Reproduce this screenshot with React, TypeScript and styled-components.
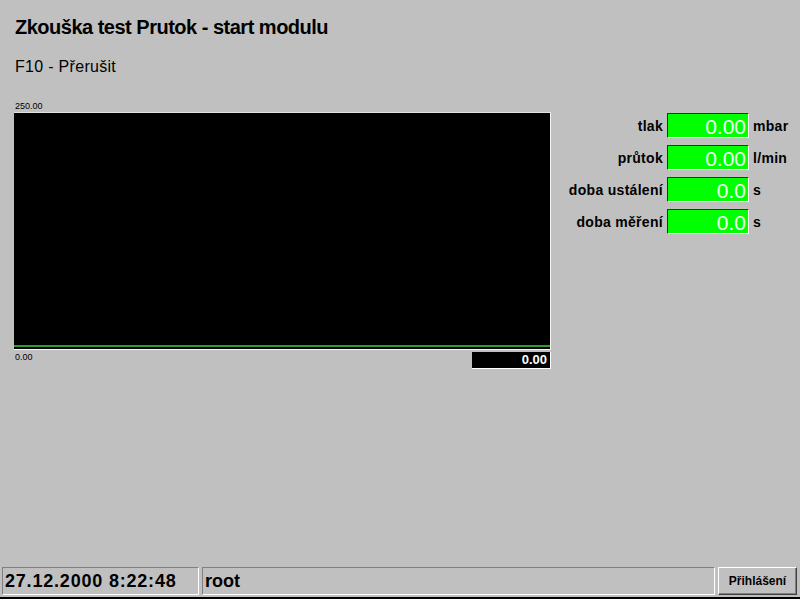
import React from 'react';
import styled, { createGlobalStyle } from 'styled-components';

const GlobalStyle = createGlobalStyle`
  html, body {
    margin: 0;
    padding: 0;
    background: #c0c0c0;
  }
  body {
    font-family: "Liberation Sans", Arial, sans-serif;
    color: #000;
  }
`;

const Screen = styled.div`
  width: 800px;
  height: 599px;
  display: flex;
  flex-direction: column;
  background: #c0c0c0;
  overflow: hidden;
`;

const Title = styled.h1`
  margin: 16px 0 0 15px;
  font-size: 20px;
  line-height: 22px;
  letter-spacing: -0.5px;
  font-weight: bold;
`;

const Hint = styled.div`
  margin: 20px 0 0 15px;
  font-size: 16px;
  line-height: 18px;
  letter-spacing: 0.3px;
`;

const Main = styled.div`
  display: flex;
  flex-direction: row;
  margin-top: 25px;
  padding-left: 14px;
`;

const ChartColumn = styled.div`
  width: 537px;
  display: flex;
  flex-direction: column;
`;

const AxisLabel = styled.div`
  font-size: 9px;
  line-height: 11px;
  padding-left: 1px;
`;

const ChartArea = styled.div`
  height: 236px;
  background: #000;
  border-top: 1px solid #e0e0e0;
  border-right: 1px solid #f4f4f4;
  border-bottom: 1px solid #f4f4f4;
  display: flex;
  flex-direction: column;
  justify-content: flex-end;
`;

const Trace = styled.div`
  height: 2px;
  margin-bottom: 2px;
  background: #2f9a2f;
`;

const ChartFooter = styled.div`
  display: flex;
  justify-content: space-between;
  align-items: flex-start;
  margin-top: 2px;
`;

const ReadoutBox = styled.div`
  width: 79px;
  height: 17px;
  box-sizing: border-box;
  background: #000;
  color: #fff;
  font-weight: bold;
  font-size: 13px;
  line-height: 16px;
  text-align: right;
  padding-right: 3px;
  border-right: 1px solid #fff;
  border-bottom: 1px solid #fff;
`;

const Panel = styled.div`
  margin: 12px 0 0 10px;
  display: grid;
  grid-template-columns: 102px 82px auto;
  column-gap: 4px;
  row-gap: 7px;
  align-items: center;
  align-self: flex-start;
`;

const FieldLabel = styled.div`
  font-size: 14px;
  font-weight: bold;
  letter-spacing: 0.3px;
  text-align: right;
  white-space: nowrap;
`;

const Field = styled.div`
  height: 25px;
  box-sizing: border-box;
  background: #00ff00;
  border-top: 1px solid #303030;
  border-left: 1px solid #303030;
  border-right: 1px solid #fff;
  border-bottom: 1px solid #fff;
  color: #f0fff0;
  font-size: 21px;
  line-height: 26px;
  text-align: right;
  padding-right: 2px;
`;

const Unit = styled.div`
  font-size: 14px;
  font-weight: bold;
  letter-spacing: 0.3px;
  white-space: nowrap;
`;

const StatusBar = styled.div`
  margin-top: auto;
  height: 33px;
  box-sizing: border-box;
  display: flex;
  gap: 3px;
  padding: 1px 3px 2px 2px;
  border-bottom: 2px solid #000;
`;

const StatusCell = styled.div<{ $width?: number; $spacing?: number }>`
  ${(p) => (p.$width ? `width: ${p.$width}px;` : 'flex: 1;')}
  height: 28px;
  box-sizing: border-box;
  border-top: 1px solid #808080;
  border-left: 1px solid #808080;
  border-right: 1px solid #fff;
  border-bottom: 1px solid #fff;
  font-size: 18px;
  font-weight: bold;
  letter-spacing: ${(p) => p.$spacing ?? 0}px;
  line-height: 26px;
  padding-left: 2px;
  white-space: nowrap;
`;

const LoginButton = styled.button`
  width: 79px;
  height: 28px;
  box-sizing: border-box;
  background: #c0c0c0;
  border-top: 1px solid #fff;
  border-left: 1px solid #fff;
  border-right: 1px solid #404040;
  border-bottom: 1px solid #404040;
  box-shadow: inset -1px -1px 0 #808080;
  font-family: "Liberation Sans", Arial, sans-serif;
  font-size: 12px;
  font-weight: bold;
  color: #000;
  padding: 0;
`;

const measurements = [
  { label: 'tlak', value: '0.00', unit: 'mbar' },
  { label: 'průtok', value: '0.00', unit: 'l/min' },
  { label: 'doba ustálení', value: '0.0', unit: 's' },
  { label: 'doba měření', value: '0.0', unit: 's' },
];

const App: React.FC = () => {
  return (
    <>
      <GlobalStyle />
      <Screen>
        <Title>Zkouška test Prutok - start modulu</Title>
        <Hint>F10 - Přerušit</Hint>
        <Main>
          <ChartColumn>
            <AxisLabel>250.00</AxisLabel>
            <ChartArea>
              <Trace />
            </ChartArea>
            <ChartFooter>
              <AxisLabel>0.00</AxisLabel>
              <ReadoutBox>0.00</ReadoutBox>
            </ChartFooter>
          </ChartColumn>
          <Panel>
            {measurements.map((m) => (
              <React.Fragment key={m.label}>
                <FieldLabel>{m.label}</FieldLabel>
                <Field>{m.value}</Field>
                <Unit>{m.unit}</Unit>
              </React.Fragment>
            ))}
          </Panel>
        </Main>
        <StatusBar>
          <StatusCell $width={197} $spacing={0.8}>27.12.2000 8:22:48</StatusCell>
          <StatusCell>root</StatusCell>
          <LoginButton>Přihlášení</LoginButton>
        </StatusBar>
      </Screen>
    </>
  );
};

export default App;
